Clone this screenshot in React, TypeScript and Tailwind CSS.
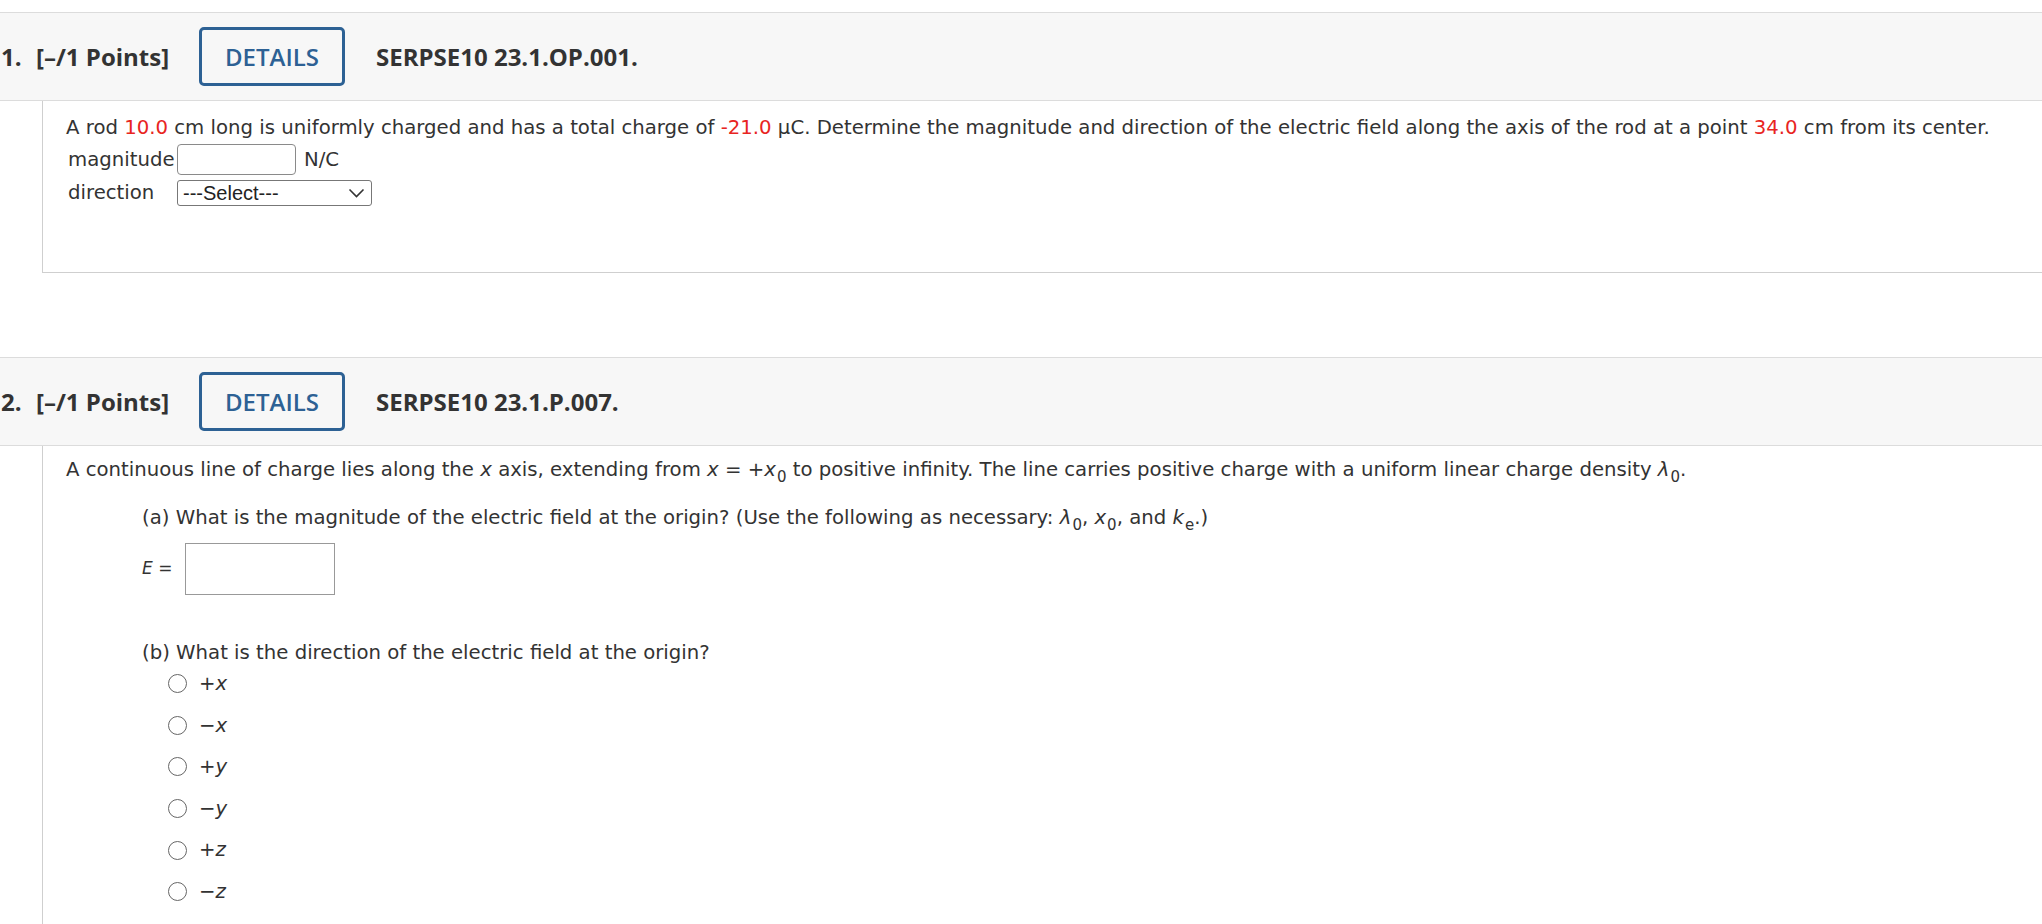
import React from "react";

const body = { fontFamily: '"DejaVu Sans", Verdana, sans-serif' };
const head = { fontFamily: '"Open Sans", "Noto Sans", sans-serif' };

function Header({ num, code }: { num: string; code: string }) {
  return (
    <div
      className="flex items-center h-[89px] bg-[#f7f7f7] border-t border-b border-[#dcdcdc] text-[#333] text-[24px]"
      style={head}
    >
      <span className="font-bold w-[36px] pl-[1px]">{num}</span>
      <span className="font-bold w-[163px]">[–/1 Points]</span>
      <button className="w-[146px] h-[59px] border-[3px] border-[#2d6194] rounded-[5px] text-[#2d6194] font-semibold text-[24px] bg-transparent">
        DETAILS
      </button>
      <span className="font-bold ml-[31px]">{code}</span>
    </div>
  );
}

function Sub({ children }: { children: React.ReactNode }) {
  return <sub className="text-[15px] relative top-[6px] bottom-auto ml-[1px]">{children}</sub>;
}

function Radio({ label }: { label: React.ReactNode }) {
  return (
    <div className="flex items-center h-[41.6px] pl-[26px]">
      <span className="w-[19px] h-[19px] rounded-full border-[1.5px] border-[#666] bg-white" />
      <span className="ml-[12px]">{label}</span>
    </div>
  );
}

export default function App() {
  return (
    <div className="w-[2042px] h-[924px] overflow-hidden bg-white text-[#333]" style={body}>
      <div className="h-[12px]" />
      <Header num="1." code="SERPSE10 23.1.OP.001." />
      <div className="ml-[42px] h-[172px] border-l border-b border-[#cfcfcf] pl-[23px] pt-[14px] text-[19.7px]">
        <div className="leading-[26px] whitespace-nowrap">
          A rod <span className="text-[#e8251f]">10.0</span> cm long is uniformly charged and has a total charge of{" "}
          <span className="text-[#e8251f]">-21.0</span> μC. Determine the magnitude and direction of the electric field along the axis of the rod at a point{" "}
          <span className="text-[#e8251f]">34.0</span> cm from its center.
        </div>
        <div className="flex items-center mt-[3px] h-[31px] pl-[2px]">
          <span className="w-[109px]">magnitude</span>
          <span className="w-[119px] h-[31px] border border-[#8a8a8a] rounded-[4px]" />
          <span className="ml-[8px]">N/C</span>
        </div>
        <div className="flex items-center mt-[5px] h-[26px] pl-[2px]">
          <span className="w-[109px]">direction</span>
          <div
            className="w-[195px] h-[26px] border border-[#777] rounded-[3px] flex items-center justify-between pl-[5px] pr-[6px] text-[20px] text-[#222]"
            style={{ fontFamily: '"Liberation Sans", Arial, sans-serif' }}
          >
            <span className="leading-none">---Select---</span>
            <svg width="17" height="11" viewBox="0 0 17 11" fill="none">
              <path d="M1.5 1.5 L8.5 8.5 L15.5 1.5" stroke="#333" strokeWidth="1.6" />
            </svg>
          </div>
        </div>
      </div>
      <div className="h-[84px]" />
      <Header num="2." code="SERPSE10 23.1.P.007." />
      <div className="ml-[42px] h-[600px] border-l border-[#cfcfcf] pl-[23px] pt-[11px] text-[19.7px]">
        <div className="leading-[26px] whitespace-nowrap">
          A continuous line of charge lies along the <i>x</i> axis, extending from <i>x</i> = +<i>x</i>
          <Sub>0</Sub> to positive infinity. The line carries positive charge with a uniform linear charge density <i>λ</i>
          <Sub>0</Sub>.
        </div>
        <div className="pl-[76px]">
          <div className="leading-[26px] mt-[22px] whitespace-nowrap">
            (a) What is the magnitude of the electric field at the origin? (Use the following as necessary: <i>λ</i>
            <Sub>0</Sub>, <i>x</i>
            <Sub>0</Sub>, and <i>k</i>
            <Sub>e</Sub>.)
          </div>
          <div className="flex items-center mt-[12px] h-[52px]">
            <span className="w-[43px] text-[17px]"><i>E</i> =</span>
            <span className="w-[150px] h-[52px] border border-[#999]" />
          </div>
          <div className="leading-[21px] mt-[47px] whitespace-nowrap">(b) What is the direction of the electric field at the origin?</div>
          <Radio label={<>+<i>x</i></>} />
          <Radio label={<>−<i>x</i></>} />
          <Radio label={<>+<i>y</i></>} />
          <Radio label={<>−<i>y</i></>} />
          <Radio label={<>+<i>z</i></>} />
          <Radio label={<>−<i>z</i></>} />
        </div>
      </div>
    </div>
  );
}
